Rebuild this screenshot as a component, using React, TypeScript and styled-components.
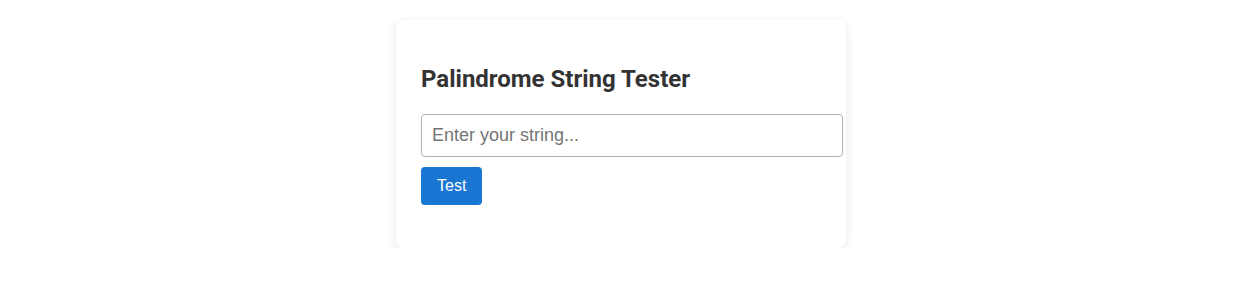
import styled, { createGlobalStyle } from "styled-components";

const GlobalStyle = createGlobalStyle`
  body {
    margin: 0;
    background: #ffffff;
    font-family: "Liberation Sans", Arial, sans-serif;
  }
`;

const App = () => {
  return (
    <>
      <GlobalStyle />
      <Page>
        <Card>
          <Title>Palindrome String Tester</Title>
          <Input type="text" placeholder="Enter your string..." />
          <Button>Test</Button>
          <Result />
        </Card>
      </Page>
    </>
  );
};

const Page = styled.div`
  display: flex;
  justify-content: center;
  padding: 20px 0 0 2px;
`;

const Card = styled.div`
  width: 400px;
  padding: 25px;
  background: #ffffff;
  border-radius: 8px;
  box-shadow: 0 2px 10px rgba(0, 0, 0, 0.1);
  display: flex;
  flex-direction: column;
  align-items: flex-start;
`;

const Title = styled.h2`
  margin: 20px 0 21px;
  font-family: Roboto, "Liberation Sans", sans-serif;
  font-size: 24px;
  font-weight: 700;
  color: #333333;
`;

const Input = styled.input`
  width: 100%;
  padding: 10px;
  font-size: 18px;
  font-family: "Liberation Sans", Arial, sans-serif;
  border: 1px solid #b3b3b3;
  border-radius: 4px;
  color: #333333;
  outline: none;

  &::placeholder {
    color: #757575;
  }
`;

const Button = styled.button`
  margin-top: 10px;
  padding: 10px 16px;
  font-size: 16px;
  font-family: "Liberation Sans", Arial, sans-serif;
  color: #ffffff;
  background: #1976d2;
  border: none;
  border-radius: 4px;
  cursor: pointer;
`;

const Result = styled.div`
  margin-top: 18px;
  font-size: 16px;
  color: #333333;
`;

export default App;
